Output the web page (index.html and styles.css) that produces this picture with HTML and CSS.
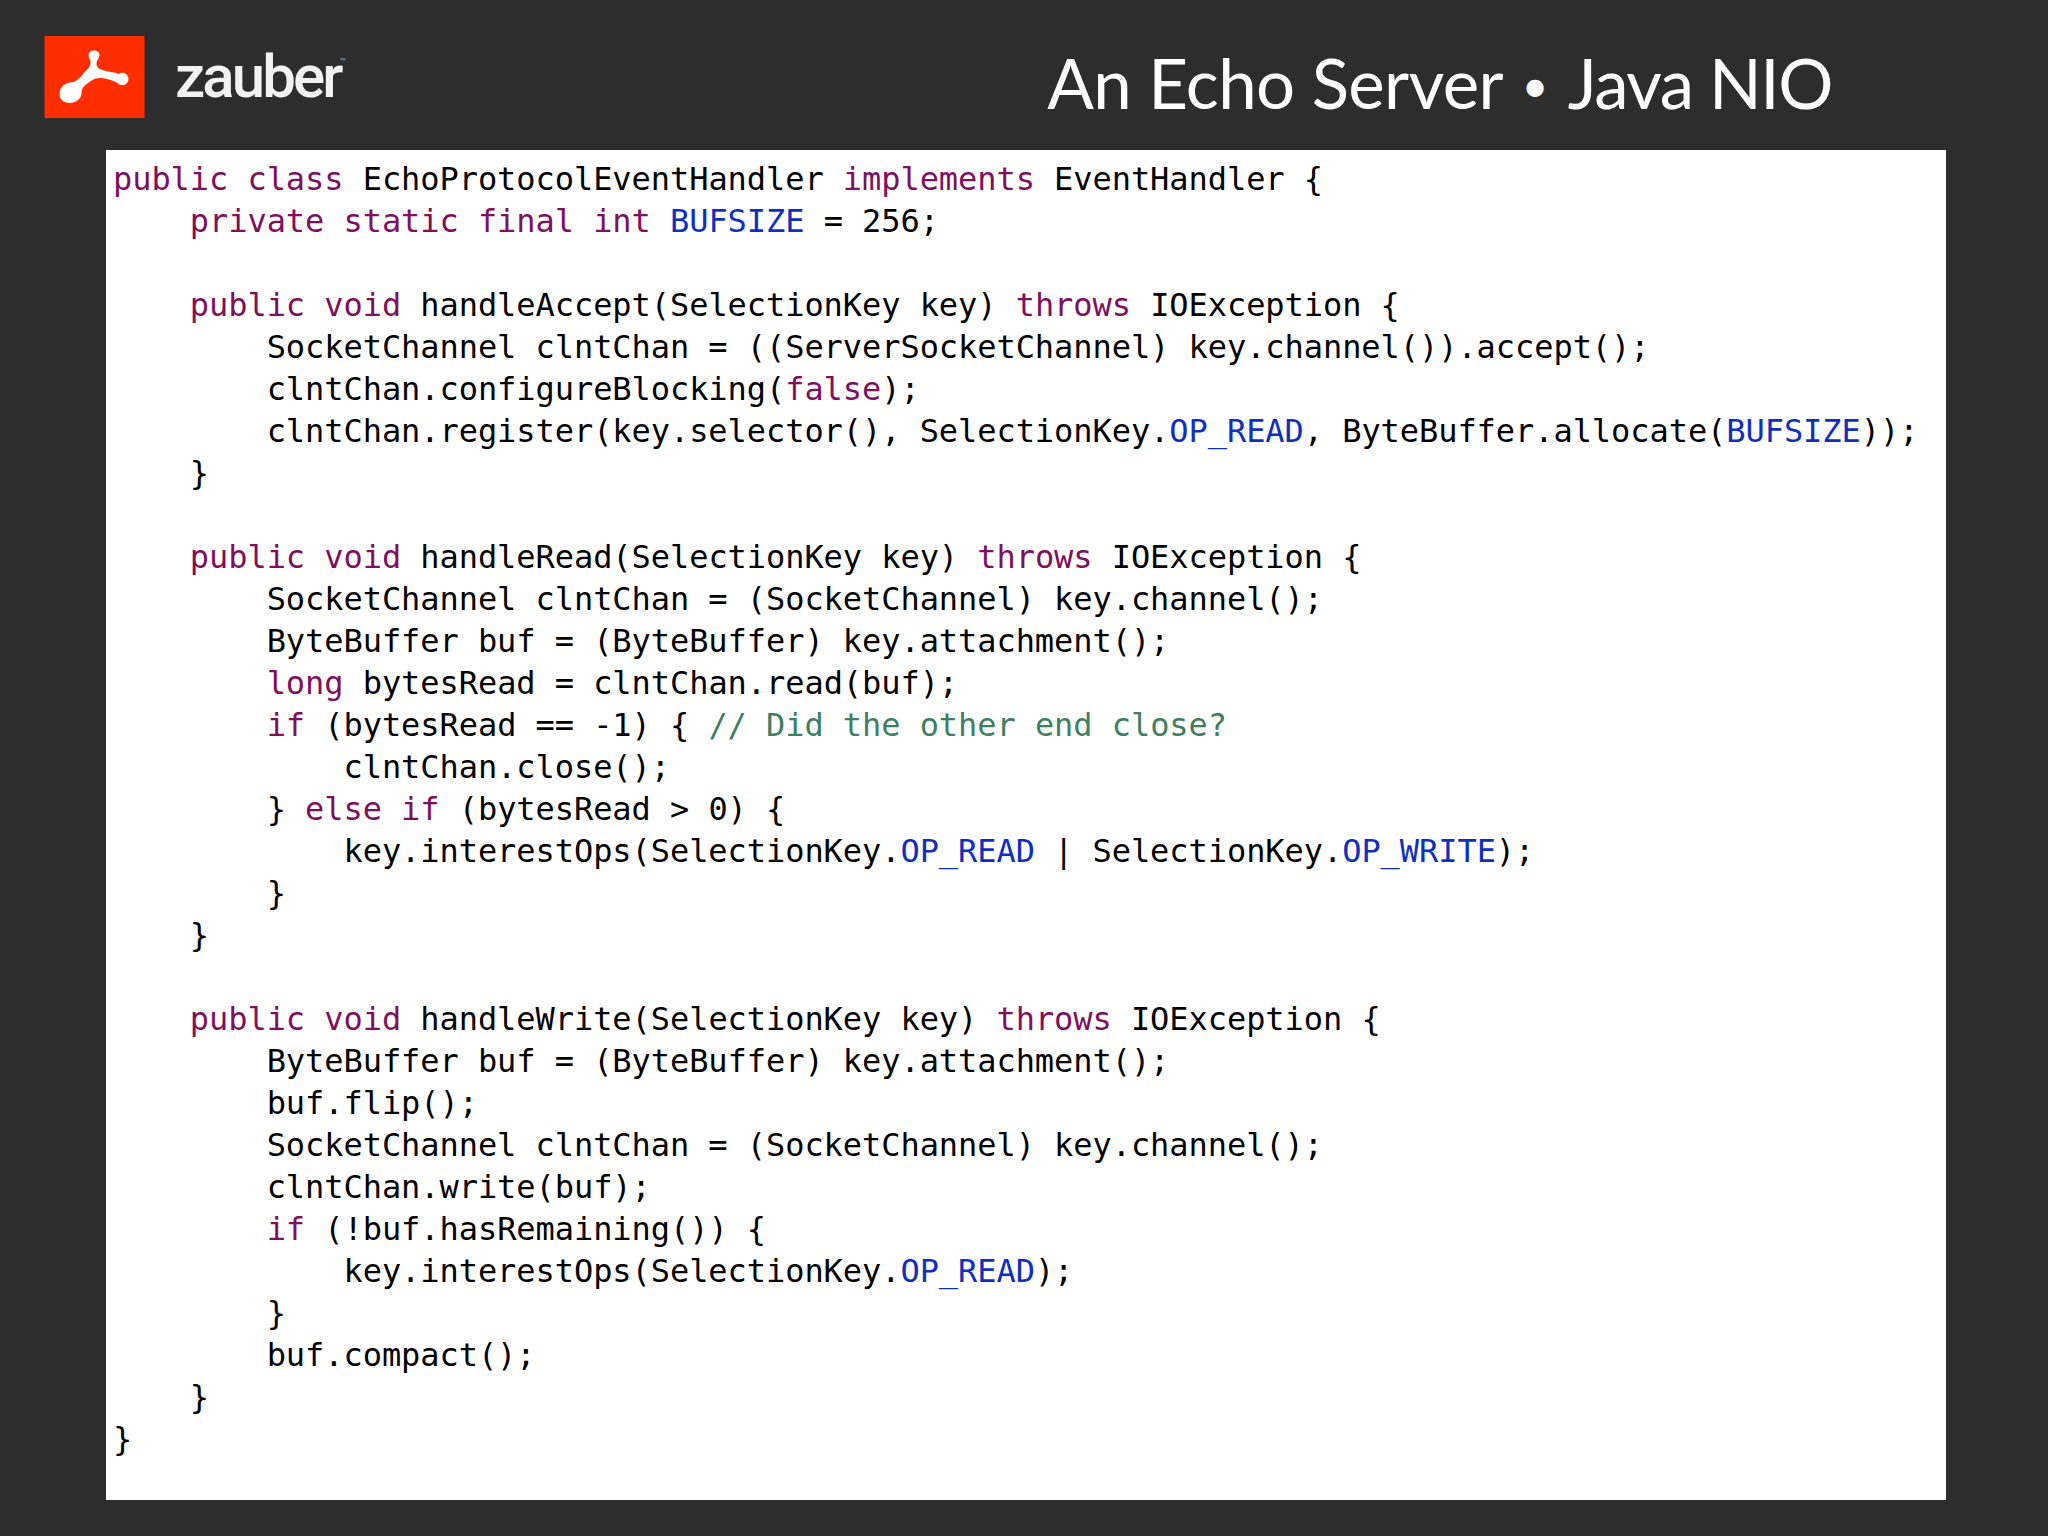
FILE: index.html
```html
<!DOCTYPE html>
<html lang="en">
<head>
<meta charset="utf-8">
<title>An Echo Server • Java NIO</title>
<link rel="stylesheet" href="styles.css">
</head>
<body>
<div class="slide">
<header class="header">
<div class="brand">
<svg class="brand-icon" viewBox="0 0 100 82" aria-hidden="true">
<rect width="100" height="82" fill="#ff2d00"/>
<path fill="#fff" d="M44 19 C44 13 55 13 55 19 C55 22 52 24 52 28 C52 31 54 33 58 34 C64 36 70 36 74 38 C78 35 84 38 84 43 C84 49 76 51 73 47 C68 44 60 42 55 42 C50 42 46 45 42 48 C38 51 37 54 37 57 C37 69 15 71 15 58 C15 50 22 46 29 46 C35 44 38 38 43 33 C46 30 46 28 46 25 C45 23 44 21 44 19 Z"/>
</svg>
<span class="brand-name">zauber<sup class="tm">™</sup></span>
</div>
<h1 class="title">An Echo Server <span class="bullet">•</span> <span class="title-end">Java NIO</span></h1>
</header>
<main class="panel">
<pre class="code"><span class="k">public class</span> EchoProtocolEventHandler <span class="k">implements</span> EventHandler {
    <span class="k">private static final int</span> <span class="c">BUFSIZE</span> = 256;

    <span class="k">public void</span> handleAccept(SelectionKey key) <span class="k">throws</span> IOException {
        SocketChannel clntChan = ((ServerSocketChannel) key.channel()).accept();
        clntChan.configureBlocking(<span class="k">false</span>);
        clntChan.register(key.selector(), SelectionKey.<span class="c">OP_READ</span>, ByteBuffer.allocate(<span class="c">BUFSIZE</span>));
    }

    <span class="k">public void</span> handleRead(SelectionKey key) <span class="k">throws</span> IOException {
        SocketChannel clntChan = (SocketChannel) key.channel();
        ByteBuffer buf = (ByteBuffer) key.attachment();
        <span class="k">long</span> bytesRead = clntChan.read(buf);
        <span class="k">if</span> (bytesRead == -1) { <span class="m">// Did the other end close?</span>
            clntChan.close();
        } <span class="k">else if</span> (bytesRead &gt; 0) {
            key.interestOps(SelectionKey.<span class="c">OP_READ</span> | SelectionKey.<span class="c">OP_WRITE</span>);
        }
    }

    <span class="k">public void</span> handleWrite(SelectionKey key) <span class="k">throws</span> IOException {
        ByteBuffer buf = (ByteBuffer) key.attachment();
        buf.flip();
        SocketChannel clntChan = (SocketChannel) key.channel();
        clntChan.write(buf);
        <span class="k">if</span> (!buf.hasRemaining()) {
            key.interestOps(SelectionKey.<span class="c">OP_READ</span>);
        }
        buf.compact();
    }
}</pre>
</main>
</div>
</body>
</html>
```
FILE: styles.css
```css
html, body {
  margin: 0;
  padding: 0;
  background: #2d2d2d;
}
.slide {
  width: 2048px;
  height: 1536px;
  display: flex;
  flex-direction: column;
  overflow: hidden;
}
.header {
  height: 150px;
  display: flex;
  justify-content: space-between;
  align-items: flex-start;
  padding: 36px 216px 0 44px;
  box-sizing: border-box;
}
.brand {
  display: flex;
  align-items: center;
  gap: 30px;
}
.brand-icon {
  width: 101px;
  height: 82px;
  display: block;
}
.brand-name {
  font-family: Roboto, sans-serif;
  font-weight: 500;
  font-size: 60px;
  line-height: 72px;
  letter-spacing: -2.9px;
  color: #f2f2f2;
  margin-top: 0;
}
.tm {
  font-size: 10px;
  line-height: 0;
  letter-spacing: 0;
  vertical-align: 32px;
  color: #999;
  margin-left: -1px;
}
.title {
  margin: 7px 0 0;
  font-family: Lato, sans-serif;
  font-weight: 400;
  font-size: 69px;
  line-height: 80px;
  letter-spacing: -0.6px;
  color: #fff;
  white-space: nowrap;
}
.title-end {
  letter-spacing: -1.4px;
}
.bullet {
  font-size: 46px;
  vertical-align: 7px;
  padding: 0 3px;
}
.panel {
  width: 1840px;
  height: 1350px;
  margin-left: 106px;
  background: #fff;
  box-sizing: border-box;
  padding: 8px 0 0 7px;
}
.code {
  margin: 0;
  font-family: "DejaVu Sans Mono", monospace;
  font-size: 32px;
  line-height: 42px;
  letter-spacing: -0.06px;
  color: #000;
}
.k { color: #7f0f5f; }
.c { color: #0f2fc0; }
.m { color: #3f7f5f; }
```
